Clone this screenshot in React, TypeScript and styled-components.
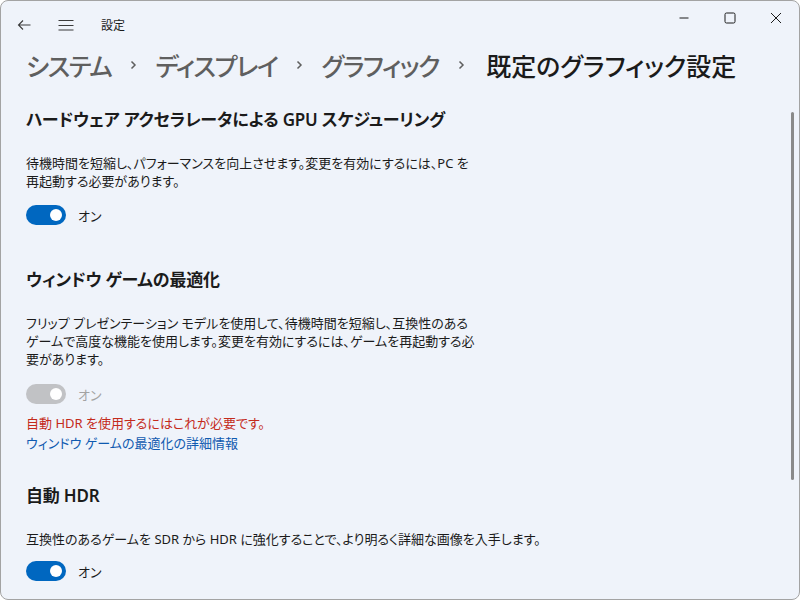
import React from "react";
import styled, { createGlobalStyle } from "styled-components";

const GlobalStyle = createGlobalStyle`
    html, body {
        margin: 0;
        padding: 0;
        background: #ffffff;
    }
    body {
        font-family: "Segoe UI", "Noto Sans", "Noto Sans CJK JP", sans-serif;
        font-feature-settings: "palt";
        color: #1b1b1b;
    }
`

const WindowFrame = styled.div`
    width: 800px;
    height: 600px;
    box-sizing: border-box;
    border: 1px solid #a3a3a3;
    border-radius: 8px;
    background: #eff3fa;
    overflow: hidden;
    display: flex;
    flex-direction: column;
`

const TitleBar = styled.div`
    height: 47px;
    display: flex;
    flex-direction: row;
    align-items: center;
    flex-shrink: 0;
`

const NavButton = styled.div`
    width: 40px;
    height: 32px;
    display: flex;
    align-items: center;
    justify-content: center;
    color: #3b3b3b;
`

const AppTitle = styled.span`
    margin-left: 15px;
    font-size: 12px;
    color: #1b1b1b;
`

const Spacer = styled.div`
    flex: 1;
`

const WindowControls = styled.div`
    align-self: flex-start;
    display: flex;
    flex-direction: row;
    height: 33px;
`

const ControlButton = styled.div`
    width: 46px;
    height: 33px;
    display: flex;
    align-items: center;
    justify-content: center;
    color: #1b1b1b;
`

const Body = styled.div`
    flex: 1;
    display: flex;
    flex-direction: row;
    min-height: 0;
`

const Main = styled.div`
    flex: 1;
    padding-left: 25px;
    display: flex;
    flex-direction: column;
`

const Breadcrumb = styled.div`
    display: flex;
    flex-direction: row;
    align-items: center;
    height: 34px;
    font-size: 25px;
    font-weight: 500;
    letter-spacing: -1.4px;
    white-space: nowrap;
`

const Crumb = styled.span<{ $current?: boolean }>`
    color: ${(p) => (p.$current ? "#1b1b1b" : "#5f5f5f")};
    letter-spacing: ${(p) => (p.$current ? "0px" : "-1.4px")};
    margin-left: ${(p) => (p.$current ? "3px" : "0")};
`

const CrumbChevron = styled.span`
    display: inline-flex;
    width: 44px;
    justify-content: center;
    color: #5f5f5f;
`

const Section = styled.div<{ $top: number }>`
    margin-top: ${(p) => p.$top}px;
    display: flex;
    flex-direction: column;
`

const Heading = styled.div`
    font-size: 17px;
    font-weight: 600;
    letter-spacing: -0.2px;
    line-height: 28px;
    color: #1b1b1b;
`

const Description = styled.div`
    margin-top: 20px;
    font-size: 13px;
    line-height: 18px;
    color: #1b1b1b;
`

const ToggleRow = styled.div<{ $top: number }>`
    margin-top: ${(p) => p.$top}px;
    display: flex;
    flex-direction: row;
    align-items: center;
    gap: 12px;
    height: 20px;
`

const Track = styled.div<{ $disabled?: boolean }>`
    width: 40px;
    height: 20px;
    box-sizing: border-box;
    border-radius: 10px;
    background: ${(p) => (p.$disabled ? "#c1c2c5" : "#0067c0")};
    display: flex;
    align-items: center;
    justify-content: flex-end;
    padding-right: 4px;
`

const Knob = styled.div`
    width: 12px;
    height: 12px;
    border-radius: 50%;
    background: #ffffff;
`

const ToggleLabel = styled.span<{ $disabled?: boolean }>`
    font-size: 13px;
    color: ${(p) => (p.$disabled ? "#a3a3a3" : "#1b1b1b")};
`

const Notice = styled.div<{ $top?: number }>`
    margin-top: ${(p) => p.$top ?? 0}px;
    font-size: 13px;
    line-height: 20px;
    color: #c42b1c;
`

const InfoLink = styled.a`
    font-size: 13px;
    line-height: 20px;
    color: #0f5ab0;
    text-decoration: none;
`

const ScrollRail = styled.div`
    width: 8px;
    padding-top: 64px;
    display: flex;
    justify-content: flex-start;
`

const ScrollThumb = styled.div`
    width: 3px;
    height: 368px;
    border-radius: 2px;
    background: #8a8a8a;
`

const Chevron = () => (
    <CrumbChevron>
        <svg width="10" height="14" viewBox="0 0 10 14" fill="none" stroke="currentColor" strokeWidth="1.5">
            <path d="M3.5 3.5 7 7l-3.5 3.5" />
        </svg>
    </CrumbChevron>
)

const Toggle: React.FC<{ disabled?: boolean }> = ({ disabled }) => (
    <>
        <Track $disabled={disabled}>
            <Knob />
        </Track>
        <ToggleLabel $disabled={disabled}>オン</ToggleLabel>
    </>
)

const App: React.FC = () => {
    return (
        <>
            <GlobalStyle />
            <WindowFrame>
                <TitleBar>
                    <NavButton style={{ marginLeft: 3 }}>
                        <svg width="16" height="16" viewBox="0 0 16 16" fill="none" stroke="currentColor" strokeWidth="1.1">
                            <path d="M2.5 8h12M7 3.5 2.5 8 7 12.5" />
                        </svg>
                    </NavButton>
                    <NavButton style={{ marginLeft: 2 }}>
                        <svg width="18" height="16" viewBox="0 0 18 16" fill="none" stroke="currentColor" strokeWidth="1.1">
                            <path d="M1.5 3.5h15M1.5 8.5h15M1.5 13h15" />
                        </svg>
                    </NavButton>
                    <AppTitle>設定</AppTitle>
                    <Spacer />
                    <WindowControls>
                        <ControlButton>
                            <svg width="12" height="12" viewBox="0 0 12 12" fill="none" stroke="currentColor" strokeWidth="1">
                                <path d="M1.5 6h9" />
                            </svg>
                        </ControlButton>
                        <ControlButton>
                            <svg width="12" height="12" viewBox="0 0 12 12" fill="none" stroke="currentColor" strokeWidth="1">
                                <rect x="1" y="1" width="10" height="10" rx="1.5" />
                            </svg>
                        </ControlButton>
                        <ControlButton>
                            <svg width="12" height="12" viewBox="0 0 12 12" fill="none" stroke="currentColor" strokeWidth="1">
                                <path d="M1 1l10 10M11 1 1 11" />
                            </svg>
                        </ControlButton>
                    </WindowControls>
                </TitleBar>
                <Body>
                    <Main>
                        <Breadcrumb>
                            <Crumb>システム</Crumb>
                            <Chevron />
                            <Crumb>ディスプレイ</Crumb>
                            <Chevron />
                            <Crumb>グラフィック</Crumb>
                            <Chevron />
                            <Crumb $current>既定のグラフィック設定</Crumb>
                        </Breadcrumb>

                        <Section $top={24}>
                            <Heading>ハードウェア アクセラレータによる GPU スケジューリング</Heading>
                            <Description>
                                待機時間を短縮し、パフォーマンスを向上させます。変更を有効にするには、PC を<br />
                                再起動する必要があります。
                            </Description>
                            <ToggleRow $top={15}>
                                <Toggle />
                            </ToggleRow>
                        </Section>

                        <Section $top={41}>
                            <Heading>ウィンドウ ゲームの最適化</Heading>
                            <Description>
                                フリップ プレゼンテーション モデルを使用して、待機時間を短縮し、互換性のある<br />
                                ゲームで高度な機能を使用します。変更を有効にするには、ゲームを再起動する必<br />
                                要があります。
                            </Description>
                            <ToggleRow $top={16}>
                                <Toggle disabled />
                            </ToggleRow>
                            <Notice $top={9}>自動 HDR を使用するにはこれが必要です。</Notice>
                            <InfoLink href="#">ウィンドウ ゲームの最適化の詳細情報</InfoLink>
                        </Section>

                        <Section $top={29}>
                            <Heading>自動 HDR</Heading>
                            <Description>
                                互換性のあるゲームを SDR から HDR に強化することで、より明るく詳細な画像を入手します。
                            </Description>
                            <ToggleRow $top={13}>
                                <Toggle />
                            </ToggleRow>
                        </Section>
                    </Main>
                    <ScrollRail>
                        <ScrollThumb />
                    </ScrollRail>
                </Body>
            </WindowFrame>
        </>
    )
}

export default App;
